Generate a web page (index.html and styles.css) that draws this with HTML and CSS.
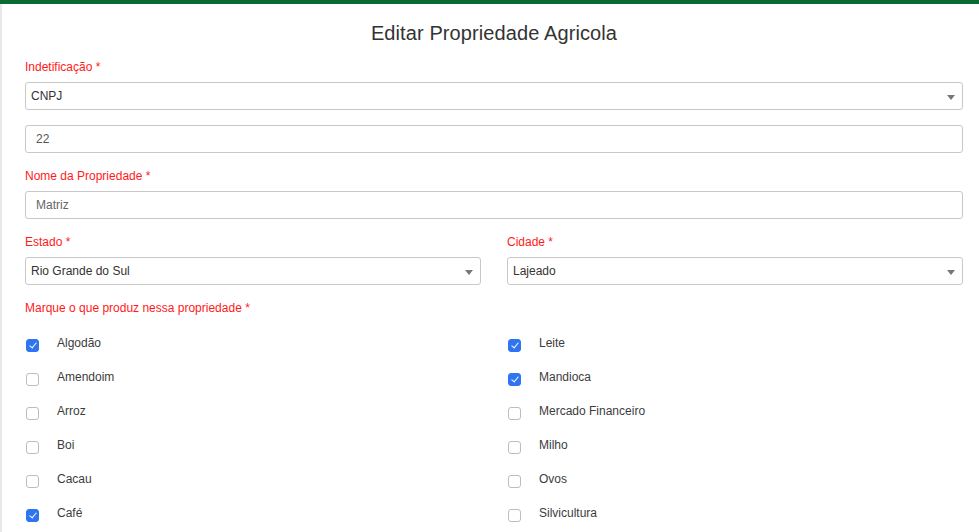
FILE: index.html
```html
<!DOCTYPE html>
<html lang="pt-BR">
<head>
<meta charset="utf-8">
<title>Editar Propriedade Agricola</title>
<link rel="stylesheet" href="styles.css">
</head>
<body>
<div class="topbar"></div>
<main class="page">
  <h1 class="title">Editar Propriedade Agricola</h1>

  <div class="group">
    <label class="label">Indetificação *</label>
    <div class="select"><span>CNPJ</span><i class="caret"></i></div>
  </div>
  <div class="group">
    <div class="input value-dark">22</div>
  </div>

  <div class="group">
    <label class="label">Nome da Propriedade *</label>
    <div class="input">Matriz</div>
  </div>

  <div class="row2">
    <div class="group">
      <label class="label">Estado *</label>
      <div class="select"><span>Rio Grande do Sul</span><i class="caret"></i></div>
    </div>
    <div class="group">
      <label class="label">Cidade *</label>
      <div class="select"><span>Lajeado</span><i class="caret"></i></div>
    </div>
  </div>

  <div class="group last">
    <label class="label">Marque o que produz nessa propriedade *</label>
    <div class="checks">
      <ul class="check-col">
        <li class="check"><span class="box on"></span>Algodão</li>
        <li class="check"><span class="box"></span>Amendoim</li>
        <li class="check"><span class="box"></span>Arroz</li>
        <li class="check"><span class="box"></span>Boi</li>
        <li class="check"><span class="box"></span>Cacau</li>
        <li class="check"><span class="box on"></span>Café</li>
      </ul>
      <ul class="check-col">
        <li class="check"><span class="box on"></span>Leite</li>
        <li class="check"><span class="box on"></span>Mandioca</li>
        <li class="check"><span class="box"></span>Mercado Financeiro</li>
        <li class="check"><span class="box"></span>Milho</li>
        <li class="check"><span class="box"></span>Ovos</li>
        <li class="check"><span class="box"></span>Silvicultura</li>
      </ul>
    </div>
  </div>
</main>
<div class="fade"></div>
</body>
</html>
```

FILE: styles.css
```css
html, body {
  margin: 0;
  padding: 0;
  background: #fff;
  height: 532px;
  overflow: hidden;
}
body {
  font-family: "Helvetica Neue", "Liberation Sans", Arial, sans-serif;
  color: #333;
}
.topbar {
  height: 4px;
  background: #0b6a31;
}
.page {
  border-left: 2px solid #e8e8e8;
  padding: 0 16px 0 23px;
  height: 528px;
  box-sizing: border-box;
  overflow: hidden;
}
.title {
  margin: 0;
  padding: 17px 0 14px;
  text-align: center;
  font-size: 20px;
  line-height: 24px;
  font-weight: 500;
  color: #333;
  letter-spacing: 0.1px;
}
.group {
  margin-bottom: 15px;
}
.group.last {
  margin-bottom: 0;
}
.label {
  display: block;
  color: #ff1a1a;
  font-size: 12px;
  line-height: 16px;
  margin-bottom: 7px;
}
.select, .input {
  box-sizing: border-box;
  height: 28px;
  border: 1px solid #c8c8c8;
  border-radius: 3px;
  display: flex;
  align-items: center;
  font-size: 12px;
  background: #fff;
}
.select {
  padding: 0 5px;
  justify-content: space-between;
  color: #333;
}
.input {
  padding: 0 10px;
  color: #666;
}
.value-dark {
  color: #555;
}
.caret {
  width: 0;
  height: 0;
  border-left: 4px solid transparent;
  border-right: 4px solid transparent;
  border-top: 5px solid #777;
  margin-right: 2px;
  margin-top: 2px;
}
.row2 {
  display: grid;
  grid-template-columns: 1fr 1fr;
  column-gap: 26px;
}
.checks {
  display: grid;
  grid-template-columns: 1fr 1fr;
  column-gap: 26px;
  margin-top: 10px;
}
.check-col {
  list-style: none;
  margin: 0;
  padding: 0;
}
.check {
  height: 34px;
  display: flex;
  align-items: center;
  font-size: 12px;
  color: #3c3c3c;
}
.box {
  box-sizing: border-box;
  width: 13px;
  height: 13px;
  margin: 4px 18px 0 1px;
  border: 1px solid #bdbdbd;
  border-radius: 3px;
  background: #fff;
  position: relative;
  flex: none;
}
.box.on {
  background: #2f74f0;
  border-color: #2f74f0;
}
.box.on::after {
  content: "";
  position: absolute;
  left: 3.5px;
  top: 1.5px;
  width: 3px;
  height: 6px;
  border-right: 1.8px solid #fff;
  border-bottom: 1.8px solid #fff;
  transform: rotate(40deg);
}
.fade {
  position: fixed;
  left: 0;
  right: 0;
  bottom: 0;
  height: 30px;
  z-index: -1;
  background: linear-gradient(to bottom, rgba(236,236,236,0), #ebebeb);
  pointer-events: none;
}
```
